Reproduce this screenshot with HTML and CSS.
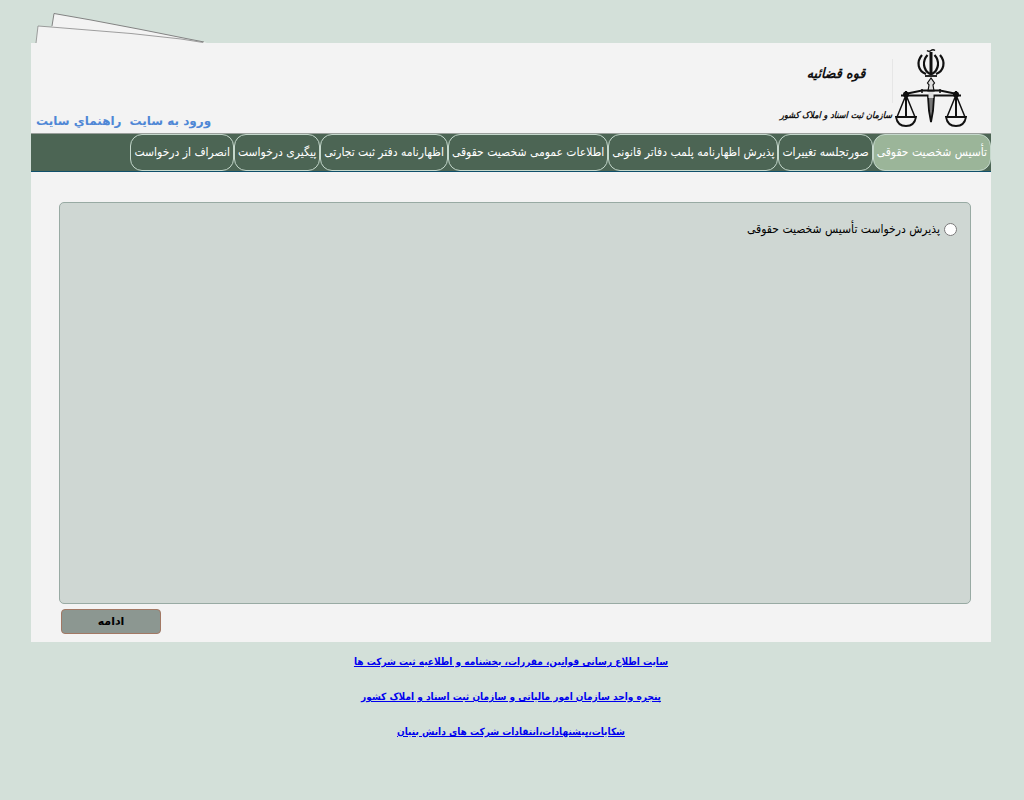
FILE: index.html
```html
<!DOCTYPE html>
<html lang="fa" dir="rtl">
<head>
    <meta charset="UTF-8">
    <meta name="viewport" content="width=device-width, initial-scale=1.0">
    <title>سازمان ثبت اسناد و املاک کشور</title>
    <link rel="stylesheet" href="styles.css">
</head>
<body>
    <div class="container">
        <svg class="papers" width="190" height="32" viewBox="0 0 190 32" aria-hidden="true">
            <path d="M21 32 V14 L23 2.500 L60 9 L110 18.500 L155 27.500 L176 32Z" fill="#f3f3f3"/>
            <path d="M21 15 L23 2.500 L60 9 L110 18.500 L155 27.500 L173 31" fill="none" stroke="#777" stroke-width="0.900"/>
            <path d="M5 32 L7 15 L20 16 L100 23 L176 32Z" fill="#f3f3f3"/>
            <path d="M5 32 L7 15 L20 16 L100 22.500 L150 28 L172 31.500" fill="none" stroke="#888" stroke-width="0.800"/>
        </svg>
        <header class="header">
            <div class="logo">
                <svg class="emblem" width="76" height="84" viewBox="0 0 76 84" role="img" aria-label="قوه قضائیه">
                    <g fill="none" stroke="#111">
                        <path d="M34 3.500 Q36 5 38 3.500 T42 3.500" stroke-width="1.500"/>
                        <path d="M38 5 V28" stroke-width="3"/>
                        <path d="M34.500 8 C29 14 30 23 37 27 M41.500 8 C47 14 46 23 39 27" stroke-width="2.200"/>
                        <path d="M29 8 C23 15 25 24 33 27 M47 8 C53 15 51 24 43 27" stroke-width="2.200"/>
                        <path d="M32 29 H44" stroke-width="1.800"/>
                        <path d="M38 31 L34.500 36 L36 38 L35 44 H41 L40 38 L41.500 36 Z" stroke-width="1.200" fill="#ddd"/>
                        <path d="M12 47 L29 43.500 H47 L64 47" stroke-width="1.800"/>
                        <path d="M8 48.500 H68" stroke-width="1.800"/>
                        <path d="M29 42 V46 M47 42 V46" stroke-width="1.500"/>
                        <path d="M13 44 V70 M63 44 V70" stroke-width="2"/>
                        <path d="M13 48 L4 70 M13 48 L22 70 M63 48 L54 70 M63 48 L72 70" stroke-width="1.500"/>
                        <path d="M3 70 H23 C22 76 18 79 13 79 S4 76 3 70Z M53 70 H73 C72 76 68 79 63 79 S54 76 53 70Z" stroke-width="1.800"/>
                        <path d="M35 50 L36 64 L38 75 L40 64 L41 50Z" fill="#777" stroke-width="1.800"/>
                    </g>
                    <circle cx="13" cy="47.500" r="3" fill="#111"/>
                    <circle cx="63" cy="47.500" r="3" fill="#111"/>
                    <rect x="35.500" y="45" width="5" height="6" fill="#ddd"/>
                </svg>
                <div class="logo-text">
                    <span class="logo-top">قوه قضائیه</span>
                    <span class="logo-bottom">سازمان ثبت اسناد و املاک کشور</span>
                </div>
            </div>
            <div class="user-links">
                <a href="#">ورود به سايت</a>
                <a href="#">راهنماي سايت</a>
            </div>
        </header>
        <nav class="menu">
            <a class="active" href="#">تأسیس شخصیت حقوقی</a>
            <a href="#">صورتجلسه تغییرات</a>
            <a href="#">پذیرش اظهارنامه پلمب دفاتر قانونی</a>
            <a href="#">اطلاعات عمومی شخصیت حقوقی</a>
            <a href="#">اظهارنامه دفتر ثبت تجارتی</a>
            <a href="#">پیگیری درخواست</a>
            <a href="#">انصراف از درخواست</a>
        </nav>
        <form class="content">
            <div class="panel">
                <input type="radio" id="establish" name="request">
                <label for="establish">پذیرش درخواست تأسیس شخصیت حقوقی</label>
            </div>
            <button type="button">ادامه</button>
        </form>
    </div>
    <footer class="footer">
        <a href="#">سایت اطلاع رسانی قوانین، مقررات، بخشنامه و اطلاعیه ثبت شرکت ها</a>
        <a href="#">پنجره واحد سازمان امور مالیاتی و سازمان ثبت اسناد و املاک کشور</a>
        <a href="#">شکایات،پیشنهادات،انتقادات شرکت های دانش بنیان</a>
    </footer>
</body>
</html>
```
FILE: styles.css
```css
* {
    box-sizing: border-box;
}
body {
    margin: 0;
    padding: 43px 33px 0 31px;
    background-color: #d3e0d9;
    font-family: "DejaVu Sans Condensed", "DejaVu Sans", sans-serif;
    font-size: 12px;
}
.container {
    position: relative;
    background-color: #f3f3f3;
}
.papers {
    position: absolute;
    left: 0;
    bottom: 100%;
}
.header {
    display: flex;
    justify-content: space-between;
    height: 90px;
}
.logo {
    display: flex;
    padding: 4px 22px 0 0;
}
.logo-text {
    display: flex;
    flex-direction: column;
    align-items: center;
    padding: 12px 1px 0 0;
    background: linear-gradient(#e6e6e6, #e6e6e6) right 12px / 1px 44px no-repeat;
    font-style: italic;
    font-weight: bold;
    color: #111;
    white-space: nowrap;
}
.logo-top {
    font-size: 14px;
    line-height: 28px;
}
.logo-bottom {
    font-size: 9px;
    line-height: 56px;
}
.user-links {
    display: flex;
    align-items: flex-end;
    gap: 8px;
    padding: 0 0 4px 5px;
    font-family: "DejaVu Sans", sans-serif;
    font-weight: bold;
    line-height: 16px;
}
.user-links a {
    color: #4f87d6;
    text-decoration: none;
}
.menu {
    display: flex;
    height: 39px;
    background-color: #4c6554;
    border-top: 1px solid #9a9f9b;
    border-bottom: 1px solid #10506b;
}
.menu a {
    padding: 0 3px;
    border: 1px solid #c5d8cc;
    border-radius: 12px;
    color: #fff;
    line-height: 35px;
    text-decoration: none;
    white-space: nowrap;
}
.menu .active {
    background-color: #9bb599;
}
.content {
    padding: 30px 20px 8px 28px;
}
.panel {
    display: flex;
    align-items: flex-start;
    gap: 4px;
    min-height: 402px;
    padding: 17px 13px;
    background-color: #cfd7d3;
    border: 1px solid #98aaa3;
    border-radius: 5px;
    line-height: 18px;
}
.panel input {
    width: 13px;
    height: 13px;
    margin: 3px 0 0;
}
.content button {
    display: block;
    width: 100px;
    height: 25px;
    margin: 5px auto 0 2px;
    padding: 0;
    background-color: #8c9791;
    border: 1px solid #a27864;
    border-radius: 4px;
    color: #000;
    font-family: "DejaVu Sans", sans-serif;
    font-size: 11px;
    font-weight: bold;
}
.footer {
    display: flex;
    flex-direction: column;
    align-items: center;
    gap: 15px;
    padding: 10px 0;
    font-size: 10px;
    font-weight: bold;
    line-height: 20px;
}
.footer a {
    color: #0000ee;
}
```
